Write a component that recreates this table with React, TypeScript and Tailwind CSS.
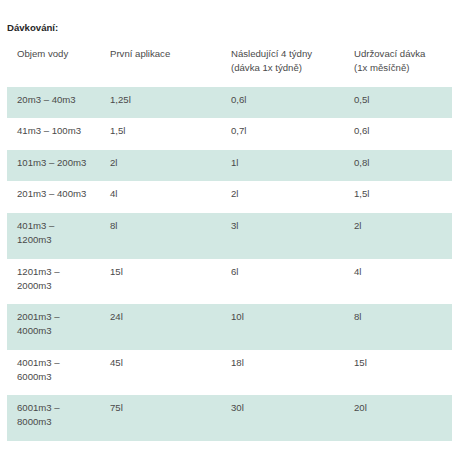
import React from 'react';

const HEAD = [
  ['Objem vody'],
  ['První aplikace'],
  ['Následující 4 týdny', '(dávka 1x týdně)'],
  ['Udržovací dávka', '(1x měsíčně)'],
];

const ROWS: string[][] = [
  ['20m3 – 40m3', '1,25l', '0,6l', '0,5l'],
  ['41m3 – 100m3', '1,5l', '0,7l', '0,6l'],
  ['101m3 – 200m3', '2l', '1l', '0,8l'],
  ['201m3 – 400m3', '4l', '2l', '1,5l'],
  ['401m3 –\n1200m3', '8l', '3l', '2l'],
  ['1201m3 –\n2000m3', '15l', '6l', '4l'],
  ['2001m3 –\n4000m3', '24l', '10l', '8l'],
  ['4001m3 –\n6000m3', '45l', '18l', '15l'],
  ['6001m3 –\n8000m3', '75l', '30l', '20l'],
];

const cell = 'pl-[10px] pr-2 pt-[6px] pb-[11.6px] align-top';

export default function App() {
  return (
    <div className="w-[452px] min-h-[452px] bg-white pl-[7px] pt-[21px] font-['Liberation_Sans',Arial,sans-serif] text-[9.6px] leading-[14px] text-[#4a4a4a]">
      <h3 className="mb-[6px] font-bold text-[#262626]">Dávkování:</h3>

      <table className="w-[445px] table-fixed border-collapse">
        <colgroup>
          <col className="w-[93px]" />
          <col className="w-[121px]" />
          <col className="w-[123px]" />
          <col />
        </colgroup>
        <thead>
          <tr>
            {HEAD.map((lines, i) => (
              <th key={i} className={`${cell} text-left font-normal`}>
                {lines.map((l) => (
                  <div key={l}>{l}</div>
                ))}
              </th>
            ))}
          </tr>
        </thead>
        <tbody>
          {ROWS.map((row, r) => (
            <tr key={r} className={r % 2 === 0 ? 'bg-[#d2e8e3]' : 'bg-white'}>
              {row.map((v, c) => (
                <td key={c} className={`${cell} whitespace-pre-line`}>
                  {v}
                </td>
              ))}
            </tr>
          ))}
        </tbody>
      </table>
    </div>
  );
}
